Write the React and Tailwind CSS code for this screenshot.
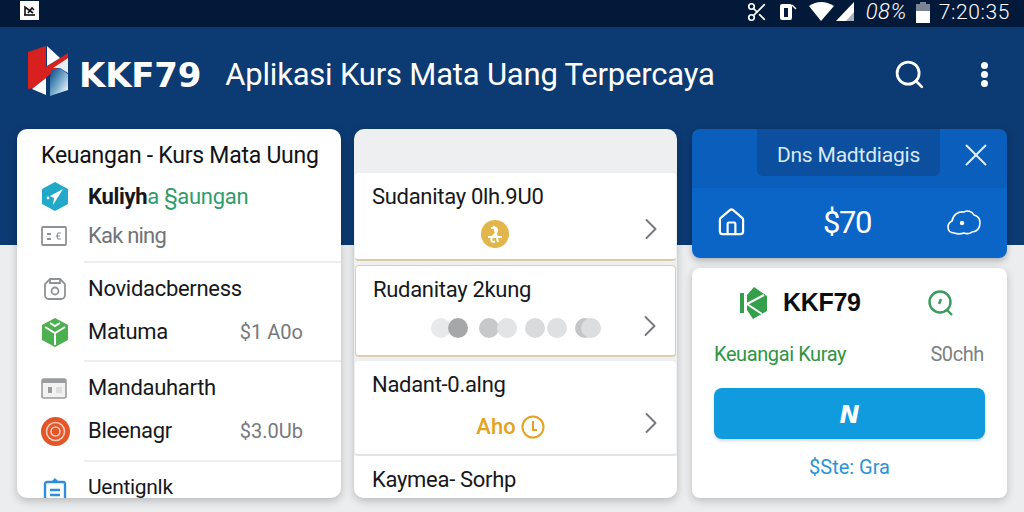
import { Search, X, ChevronRight, House, Scissors } from "lucide-react";

function Logo() {
  return (
    <svg width="42" height="52" viewBox="27 45 42 52" className="-mt-[7px] shrink-0">
      <defs>
        <linearGradient id="logoBlue" x1="0" y1="0" x2="1" y2="1">
          <stop offset="0.1" stopColor="#14588f" />
          <stop offset="0.55" stopColor="#7fb0d0" />
          <stop offset="0.9" stopColor="#eef4f8" />
        </linearGradient>
      </defs>
      <polygon points="28,52 46,46 46,67 68,53 68,59 34,88 28,89" fill="#d8201f" />
      <polygon points="47,46 60,58 47,66" fill="#ffffff" />
      <polygon points="32,89 46,78 46,95" fill="#ffffff" />
      <polygon points="53,68 68,58 68,73 60,68" fill="#e6eef4" />
      <polygon points="52,70 60,68 68,74 68,90 50,96 50,78" fill="url(#logoBlue)" />
    </svg>
  );
}

function GreenLogo() {
  return (
    <svg width="28" height="32" viewBox="0 0 28 32">
      <rect x="1" y="6" width="4" height="20" fill="#34a04c" />
      <polygon points="8,8 15,0 28,9 28,24 14,32 8,23" fill="#34a04c" />
      <path d="M8 17L25 8M8 17L23 27" stroke="#ffffff" strokeWidth="2" fill="none" />
    </svg>
  );
}

function Divider() {
  return <div className="ml-[67px] h-[2px] bg-[#eeeeee]" />;
}

function MenuRow({ icon, children, value, h = "h-[40px]" }) {
  return (
    <div className={`flex items-center pl-[24px] pr-[38px] ${h}`}>
      <div className="flex w-[47px] shrink-0 items-center">{icon}</div>
      <div className="flex-1 text-[22px] leading-[20px] tracking-[-0.3px] text-[#16181b]">{children}</div>
      {value && <div className="text-[20px] text-[#77797c]">{value}</div>}
    </div>
  );
}

function RateCard({ title, border, children, height, chevronTop }) {
  return (
    <div className={`relative mx-[1px] shrink-0 rounded-[4px] bg-white px-[17px] pt-[10px] ${height} ${border}`}>
      <div className="text-[22px] leading-[28px] tracking-[-0.3px] text-[#16181b]">{title}</div>
      <div className="flex justify-center">{children}</div>
      <ChevronRight className={`absolute right-[7px] text-[#77797c] ${chevronTop}`} size={36} strokeWidth={1.3} />
    </div>
  );
}

export default function App() {
  return (
    <div className="flex h-[512px] w-[1024px] flex-col overflow-hidden bg-[linear-gradient(to_bottom,#0c3a72_0,#0c3a72_245px,#ecedee_245px)] font-['Roboto',sans-serif]">
      {/* status bar */}
      <div className="flex h-[27px] shrink-0 items-start bg-[#03193a] pl-[20px] pr-[14px] pt-[1px] text-white">
        <div className="flex h-[19px] w-[19px] items-center justify-center bg-white">
          <svg width="13" height="11" viewBox="0 0 13 11" fill="none" stroke="#111" strokeWidth="1.6">
            <path d="M2 10V2l8 6M5 8l4-5 2 2" />
            <path d="M1 10h11" />
          </svg>
        </div>
        <div className="ml-auto flex items-center">
          <Scissors size={22} strokeWidth={1.8} className="mr-[11px]" />
          <svg width="18" height="20" viewBox="0 0 18 20" fill="none" className="mr-[11px]">
            <rect x="1" y="2" width="12" height="16" rx="2" fill="#fff" />
            <rect x="5" y="6" width="4" height="9" fill="#03193a" />
            <path d="M13 3l4 4" stroke="#fff" strokeWidth="1.5" />
          </svg>
          <svg width="48" height="22" viewBox="0 0 48 22" className="mr-[10px]">
            <path d="M1 5Q13 -3 26 5L13 20Z" fill="#fff" />
            <polygon points="28,20 46,1 46,20" fill="#fff" />
            <polygon points="38,20 46,11 46,20" fill="#a9b0b8" />
          </svg>
          <span className="mr-[9px] text-[22px] font-light italic leading-none tracking-[0.5px]">08%</span>
          <div className="mr-[9px] flex h-[21px] w-[14px] flex-col">
            <div className="mx-auto h-[2px] w-[6px] bg-[#7a8494]" />
            <div className="h-[7px] bg-[#7a8494]" />
            <div className="flex-1 bg-white" />
          </div>
          <span className="text-[21px] font-light leading-none tracking-[0.6px]">7:20:35</span>
        </div>
      </div>

      {/* app header */}
      <div className="flex h-[102px] shrink-0 items-center pb-[7px] pl-[27px] pr-[36px] text-white">
        <Logo />
        <span className="ml-[10px] font-['DejaVu_Sans',sans-serif] text-[34px] font-bold leading-none tracking-[-0.2px]">KKF79</span>
        <span className="ml-[24px] text-[31px] leading-none tracking-[-0.2px]">Aplikasi Kurs Mata Uang Terpercaya</span>
        <Search className="ml-auto" size={33} strokeWidth={2} />
        <div className="ml-[55px] flex flex-col gap-[2px]">
          <div className="h-[7px] w-[7px] rounded-full bg-white" />
          <div className="h-[7px] w-[7px] rounded-full bg-white" />
          <div className="h-[7px] w-[7px] rounded-full bg-white" />
        </div>
      </div>

      {/* columns */}
      <div className="flex h-[369px] pl-[17px] pr-[17px]">
        <div className="h-full w-[324px] overflow-hidden rounded-[10px] bg-white shadow-[0_3px_8px_rgba(0,0,0,0.22)]">
          <div className="pl-[24px] pt-[13px] text-[23px] leading-[28px] tracking-[-0.25px] text-[#111317]">
            Keuangan - Kurs Mata Uung
          </div>
          <div className="mt-[7px]">
            <MenuRow
              h="h-[39px]"
              icon={
                <svg width="28" height="29" viewBox="0 0 28 29">
                  <polygon points="14,0 27,7 27,22 14,29 1,22 1,7" fill="#22a9c9" />
                  <polygon points="22,7 9,14 13,16 12,23" fill="#fff" />
                  <circle cx="7" cy="16" r="1.4" fill="#fff" />
                </svg>
              }
            >
              <span className="font-bold">Kuliyh</span>
              <span className="text-[#2f9c6b]">a §aungan</span>
            </MenuRow>
            <MenuRow
              h="h-[39px]"
              icon={
                <svg width="26" height="20" viewBox="0 0 26 20" fill="none">
                  <rect x="1" y="1" width="24" height="18" rx="1" stroke="#8f9294" strokeWidth="1.8" />
                  <path d="M6 8h4M6 13h4" stroke="#8f9294" strokeWidth="2" />
                  <path d="M20 7h-3l-1 3 1 3h3M15 10h4" stroke="#8f9294" strokeWidth="1.2" />
                </svg>
              }
            >
              <span className="tracking-[-0.8px] text-[#717375]">Kak ning</span>
            </MenuRow>
          </div>
          <div className="mt-[6px]">
            <Divider />
          </div>
          <div className="mt-[6px]">
            <MenuRow
              icon={
                <svg width="24" height="24" viewBox="0 0 24 24" fill="none" className="ml-[2px]" stroke="#8f9294" strokeWidth="1.8">
                  <path d="M7 2h10l5 5v11a4 4 0 0 1-4 4H6a4 4 0 0 1-4-4V7z" />
                  <path d="M7 2v4h10V2" />
                  <circle cx="12" cy="14" r="3.5" />
                </svg>
              }
            >
              Novidacberness
            </MenuRow>
            <div className="mt-[3px]">
              <MenuRow
                value="$1 A0o"
                icon={
                  <svg width="28" height="29" viewBox="0 0 28 29">
                    <polygon points="14,0 27,7 27,22 14,29 1,22 1,7" fill="#4caf50" />
                    <path d="M4 9l10 6 10-6M14 15v12M9 5l5 3 5-3" stroke="#fff" strokeWidth="2" fill="none" />
                  </svg>
                }
              >
                Matuma
              </MenuRow>
            </div>
          </div>
          <div className="mt-[8px]">
            <Divider />
          </div>
          <div className="mt-[6px]">
            <MenuRow
              icon={
                <svg width="26" height="21" viewBox="0 0 26 21" fill="none">
                  <rect x="1" y="1" width="24" height="19" rx="2" fill="#f2f2f2" stroke="#9a9c9e" strokeWidth="1.6" />
                  <rect x="1" y="1" width="24" height="4" fill="#9a9c9e" />
                  <rect x="7" y="9" width="4" height="6" fill="#9a9c9e" />
                  <rect x="15" y="9" width="6" height="6" fill="#dddddd" />
                </svg>
              }
            >
              Mandauharth
            </MenuRow>
            <div className="mt-[3px]">
              <MenuRow
                value="$3.0Ub"
                icon={
                  <svg width="29" height="29" viewBox="0 0 29 29" fill="none">
                    <circle cx="14.5" cy="14.5" r="14.5" fill="#e2562a" />
                    <circle cx="14.5" cy="14.5" r="9" stroke="#f8c9b5" strokeWidth="1.6" />
                    <circle cx="14.5" cy="14.5" r="4.5" stroke="#f8c9b5" strokeWidth="1.6" />
                  </svg>
                }
              >
                Bleenagr
              </MenuRow>
            </div>
          </div>
          <div className="mt-[9px]">
            <Divider />
          </div>
          <div className="mt-[15px]">
            <MenuRow
              h="h-[20px]"
              icon={
                <svg width="24" height="29" viewBox="0 0 24 29" fill="none" className="ml-[2px] mt-[9px] shrink-0">
                  <rect x="2" y="5" width="20" height="23" rx="2" stroke="#2f8fdc" strokeWidth="2.4" />
                  <path d="M8 5l4-4 4 4z" fill="#2f8fdc" />
                  <path d="M7 13h10M7 18h10" stroke="#2f8fdc" strokeWidth="2.4" />
                </svg>
              }
            >
              <span className="text-[21px]">Uentignlk</span>
            </MenuRow>
          </div>
        </div>

        <div className="ml-[13px] flex h-full w-[323px] flex-col overflow-hidden rounded-[10px] bg-[#eeeff0] shadow-[0_3px_8px_rgba(0,0,0,0.22)]">
          <div className="h-[44px] shrink-0" />
          <RateCard title="Sudanitay 0lh.9U0" height="h-[88px]" border="border-b-2 border-[#d9cba6]" chevronTop="top-[38px]">
            <svg width="28" height="28" viewBox="0 0 28 28" fill="none" className="mr-[42px] mt-[9px]">
              <circle cx="14" cy="14" r="14" fill="#e3b64b" />
              <path d="M10 8c6-2 8 2 4 6s-6 8 0 8M7 17h14M13 6l4 16" stroke="#fff" strokeWidth="2" />
            </svg>
          </RateCard>
          <div className="h-[4px] shrink-0" />
          <RateCard title="Rudanitay 2kung" height="h-[92px]" border="border border-b-2 border-[#dccfae]" chevronTop="top-[42px]">
            <div className="mt-[14px] flex items-center">
              <div className="h-[20px] w-[20px] rounded-full bg-[#e8e9ea]" />
              <div className="-ml-[3px] h-[20px] w-[20px] rounded-full bg-[#a5a7a9]" />
              <div className="ml-[11px] h-[20px] w-[20px] rounded-full bg-[#c6c8ca]" />
              <div className="-ml-[2px] h-[20px] w-[20px] rounded-full bg-[#e3e4e6]" />
              <div className="ml-[8px] h-[20px] w-[20px] rounded-full bg-[#d9dadc]" />
              <div className="ml-[2px] h-[20px] w-[20px] rounded-full bg-[#dfe0e2]" />
              <div className="ml-[8px] h-[20px] w-[20px] rounded-full bg-[#c3c5c7]" />
              <div className="-ml-[14px] h-[20px] w-[20px] rounded-full bg-[#dcddde]" />
            </div>
          </RateCard>
          <div className="h-[4px] shrink-0" />
          <RateCard title="Nadant-0.alng" height="h-[95px]" border="border-b-2 border-[#e2e3e3]" chevronTop="top-[44px]">
            <div className="mr-[10px] mt-[14px] flex items-center gap-[5px] text-[22px] font-medium leading-[28px] text-[#e3a21f]">
              <span>Aho</span>
              <svg width="24" height="24" viewBox="0 0 24 24" fill="none" stroke="#e3a21f" strokeWidth="2">
                <circle cx="12" cy="12" r="10.5" />
                <path d="M12 6v9h4" />
              </svg>
            </div>
          </RateCard>
          <div className="flex-1 bg-white pl-[18px] pt-[10px] text-[22px] leading-[28px] tracking-[-0.3px] text-[#16181b]">
            Kaymea- Sorhp
          </div>
        </div>

        <div className="ml-[15px] flex h-full w-[315px] flex-col">
          <div className="h-[129px] shrink-0 overflow-hidden rounded-[8px] bg-[linear-gradient(to_bottom,#0b5fbc_59px,#0a65c6_59px)] text-white shadow-[0_3px_6px_rgba(0,0,0,0.25)]">
            <div className="flex h-[47px]">
              <div className="ml-[65px] flex h-full w-[183px] items-center justify-center rounded-b-[6px] bg-[#0b4f9e] pt-[6px] text-[21px] leading-none tracking-[-0.2px] text-[#d9e8f7]">
                Dns Madtdiagis
              </div>
              <X className="ml-[17px] mt-[7px] text-[#e4eef8]" size={38} strokeWidth={1.2} />
            </div>
            <div className="flex h-[82px] items-center justify-between pl-[24px] pr-[26px] pt-[10px]">
              <House size={31} strokeWidth={1.7} />
              <span className="text-[31px] leading-none tracking-[-1.5px]">$70</span>
              <svg width="34" height="30" viewBox="0 0 34 30" fill="none" stroke="#fff" strokeWidth="1.6">
                <path d="M7 26c-4 0-6-3-6-6 0-3 2-5 4-6 1-6 6-10 12-9 3-2 8-1 10 3 4 1 6 4 6 8 0 5-3 9-8 9-2 2-6 2-8 1-3 1-7 1-10 0z" />
                <circle cx="15" cy="16" r="1.4" fill="#fff" />
              </svg>
            </div>
          </div>
          <div className="mt-[10px] flex-1 rounded-[8px] bg-white px-[22px] shadow-[0_3px_8px_rgba(0,0,0,0.2)]">
            <div className="flex h-[69px] items-center">
              <div className="ml-[25px]">
                <GreenLogo />
              </div>
              <span className="ml-[16px] font-['Liberation_Sans',sans-serif] text-[25px] font-bold tracking-[-0.3px] text-[#0c0d0f]">KKF79</span>
              <svg width="26" height="28" viewBox="0 0 26 28" fill="none" stroke="#3a9b5c" strokeWidth="2.4" className="ml-[67px]">
                <circle cx="12" cy="13" r="10.5" />
                <path d="M19 21l5 5M13 10l-2 5" />
              </svg>
            </div>
            <div className="flex h-[33px] items-center justify-between pr-[1px] text-[20px] tracking-[-0.4px]">
              <span className="text-[#2f9440]">Keuangai Kuray</span>
              <span className="text-[#7d7f81]">S0chh</span>
            </div>
            <div className="mt-[18px] flex h-[51px] items-center justify-center rounded-[8px] bg-[#109bdf] pt-[2px] font-['DejaVu_Sans',sans-serif] text-[24px] font-bold italic text-white shadow-[0_2px_3px_rgba(0,0,0,0.15)]">
              N
            </div>
            <div className="mt-[15px] text-center text-[20px] leading-[26px] text-[#2a93d6]">$Ste: Gra</div>
          </div>
        </div>
      </div>
    </div>
  );
}
